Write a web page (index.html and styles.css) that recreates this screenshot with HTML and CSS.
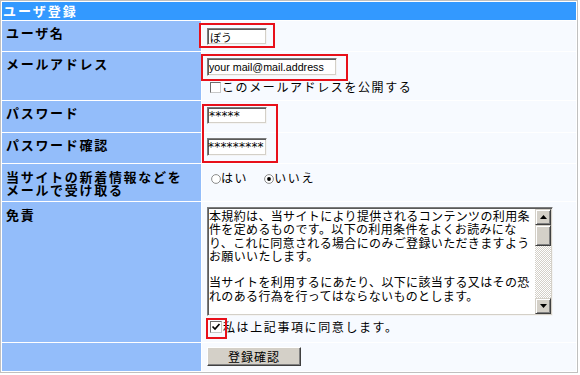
FILE: index.html
```html
<!DOCTYPE html>
<html lang="ja">
<head>
<meta charset="utf-8">
<title>ユーザ登録</title>
<link rel="stylesheet" href="styles.css">
</head>
<body>
<form class="frame">
  <div class="head">ユーザ登録</div>

  <div class="lab">ユーザ名</div>
  <div class="val">
    <input class="field f-name" type="text" value="ぼう">
  </div>

  <div class="lab">メールアドレス</div>
  <div class="val">
    <input class="field f-mail" type="text" value="your mail@mail.address">
    <div class="chk"><span class="box"></span><span>このメールアドレスを公開する</span></div>
  </div>

  <div class="lab">パスワード</div>
  <div class="val">
    <input class="field f-pw" type="text" value="*****">
  </div>

  <div class="lab">パスワード確認</div>
  <div class="val">
    <input class="field f-pw f-pw2" type="text" value="*********">
  </div>

  <div class="lab lab-low"><div class="lab-line">当サイトの新着情報などを</div><div class="lab-line">メールで受け取る</div></div>
  <div class="val v-radio">
    <span class="radio"><svg class="rd" width="10" height="10" viewBox="0 0 10 10"><circle cx="5" cy="5" r="4.4" fill="#fff" stroke="#8c8c8c" stroke-width="1"/></svg>はい</span>
    <span class="radio radio-2"><svg class="rd" width="10" height="10" viewBox="0 0 10 10"><circle cx="5" cy="5" r="4.4" fill="#fff" stroke="#8c8c8c" stroke-width="1"/><circle cx="5" cy="5" r="1.9" fill="#000"/></svg>いいえ</span>
  </div>

  <div class="lab lab-low">免責</div>
  <div class="val">
    <div class="terms">
      <div class="terms-text">
        <div class="t-line">本規約は、当サイトにより提供されるコンテンツの利用条</div>
        <div class="t-line">件を定めるものです。以下の利用条件をよくお読みにな</div>
        <div class="t-line">り、これに同意される場合にのみご登録いただきますよう</div>
        <div class="t-line">お願いいたします。</div>
        <div class="t-line"></div>
        <div class="t-line">当サイトを利用するにあたり、以下に該当する又はその恐</div>
        <div class="t-line">れのある行為を行ってはならないものとします。</div>
      </div>
      <div class="sb">
        <span class="sb-btn"><svg width="7" height="4" viewBox="0 0 7 4"><path d="M3.5 0 L7 4 L0 4 Z" fill="#000"/></svg></span>
        <span class="sb-thumb"></span>
        <span class="sb-btn sb-down"><svg width="7" height="4" viewBox="0 0 7 4"><path d="M0 0 L7 0 L3.5 4 Z" fill="#000"/></svg></span>
      </div>
    </div>
    <div class="chk chk-agree"><span class="box box-on"><svg width="10" height="10" viewBox="0 0 10 10"><path d="M1.5 4.5 L4 7 L8.5 2" fill="none" stroke="#000" stroke-width="1.7"/></svg></span><span>私は上記事項に同意します。</span></div>
  </div>

  <div class="lab"></div>
  <div class="val v-btn">
    <button type="button" class="btn">登録確認</button>
  </div>

  <div class="mark m-name"></div>
  <div class="mark m-mail"></div>
  <div class="mark m-pw"></div>
  <div class="mark m-agree"></div>
</form>
</body>
</html>
```

FILE: styles.css
```css
* { box-sizing: border-box; }

body {
  margin: 0;
  background: #fff;
  color: #000;
  font-family: "Noto Sans CJK JP", "Noto Sans CJK SC", sans-serif;
}

.frame {
  position: relative;
  display: grid;
  grid-template-columns: 199px 374px;
  grid-template-rows: 18px 30px 48px 31px 30px 37px 140px 28px;
  gap: 1px;
  width: 578px;
  height: 373px;
  margin: 0;
  padding: 1px;
  border: 1px solid #c0c0c0;
  background: #fff;
}

.head {
  grid-column: 1 / -1;
  background: #3399ff;
  color: #fff;
  font-weight: bold;
  font-size: 13px;
  letter-spacing: 2px;
  line-height: 18px;
  padding-left: 1px;
}

.lab {
  background: #93bdfa;
  font-weight: bold;
  font-size: 13px;
  letter-spacing: 1.7px;
  line-height: 13px;
  padding: 5px 0 0 4px;
}

.lab-low { padding-top: 6px; }

.lab-line { height: 12.5px; white-space: nowrap; }

.val {
  background: #f7faff;
  padding-left: 5px;
  font-size: 12px;
  letter-spacing: 1.6px;
  line-height: 14px;
  display: flex;
  flex-direction: column;
  align-items: flex-start;
}

.field {
  display: block;
  margin: 0;
  padding: 0 1px 0 2px;
  background: #fff;
  border: 1px solid;
  border-color: #7c7c7c #f4f4f4 #f4f4f4 #7c7c7c;
  box-shadow: inset 1px 1px 0 #5a5a5a, inset -1px -1px 0 #d4d0c8;
  color: #000;
  font-family: "Noto Sans CJK JP", sans-serif;
  font-size: 11px;
  letter-spacing: 0;
  outline: none;
  border-radius: 0;
}

.f-name { width: 60px; height: 17px; margin-top: 7px; }

.f-mail {
  width: 130px;
  height: 18px;
  margin-top: 6px;
  padding-left: 1px;
  font-family: "Liberation Sans", sans-serif;
  font-size: 10.7px;
}

.f-pw {
  width: 60px;
  height: 17px;
  margin-top: 6px;
  padding-left: 1px;
  font-family: "DejaVu Sans", sans-serif;
  font-size: 12px;
  letter-spacing: 0.2px;
}

.f-pw2 { height: 18px; margin-top: 5px; padding-left: 0; }

.chk {
  display: flex;
  align-items: center;
  margin: 4px 0 0 3px;
  white-space: nowrap;
}

.box {
  flex: none;
  display: flex;
  align-items: center;
  justify-content: center;
  width: 11px;
  height: 11px;
  margin-right: 1px;
  background: #fff;
  border: 1px solid;
  border-color: #6e6e6e #c8c8c8 #c8c8c8 #6e6e6e;
}

.box-on { width: 12px; height: 12px; }

.chk-agree { margin-top: 4px; }

.v-radio {
  flex-direction: row;
  align-items: flex-start;
  padding-top: 7px;
  padding-left: 9px;
}

.radio {
  display: inline-flex;
  align-items: center;
  white-space: nowrap;
}

.rd { flex: none; margin-top: 1px; }

.radio-2 { margin-left: 16px; }

.terms {
  display: flex;
  width: 346px;
  height: 109px;
  margin-top: 5px;
  padding: 1px;
  background: #fff;
  border: 1px solid;
  border-color: #7c7c7c #f4f4f4 #f4f4f4 #7c7c7c;
  box-shadow: inset 1px 1px 0 #5a5a5a, inset -1px -1px 0 #d4d0c8;
}

.terms-text {
  flex: 1;
  min-width: 0;
  font-size: 12px;
  letter-spacing: 0.35px;
  line-height: 13.3px;
}

.t-line { height: 13.3px; white-space: nowrap; }

.sb {
  flex: none;
  width: 16px;
  display: flex;
  flex-direction: column;
  background: repeating-conic-gradient(#d4d0c8 0 25%, #fff 0 50%) 0 0 / 2px 2px;
}

.sb-btn,
.sb-thumb {
  display: flex;
  align-items: center;
  justify-content: center;
  width: 16px;
  height: 16px;
  background: #d4d0c8;
  border: 1px solid;
  border-color: #d4d0c8 #404040 #404040 #d4d0c8;
  box-shadow: inset 1px 1px 0 #fff, inset -1px -1px 0 #808080;
}

.sb-thumb { height: 21px; }

.sb-down { margin-top: auto; }

.v-btn { padding-top: 4px; }

.btn {
  width: 94px;
  height: 19px;
  margin: 0;
  padding: 0;
  background: #d4d0c8;
  border: 1px solid;
  border-color: #fff #404040 #404040 #fff;
  box-shadow: inset -1px -1px 0 #808080;
  border-radius: 0;
  color: #000;
  font-family: "Noto Sans CJK JP", sans-serif;
  font-size: 12px;
  letter-spacing: 1px;
  line-height: 17px;
}

.mark {
  position: absolute;
  border: 2px solid #e8101a;
  pointer-events: none;
}

.m-name { left: 198px; top: 22px; width: 76px; height: 25px; }
.m-mail { left: 200px; top: 53px; width: 147px; height: 27px; }
.m-pw { left: 201px; top: 103px; width: 76px; height: 59px; }
.m-agree { left: 205px; top: 317px; width: 21px; height: 21px; }
```
